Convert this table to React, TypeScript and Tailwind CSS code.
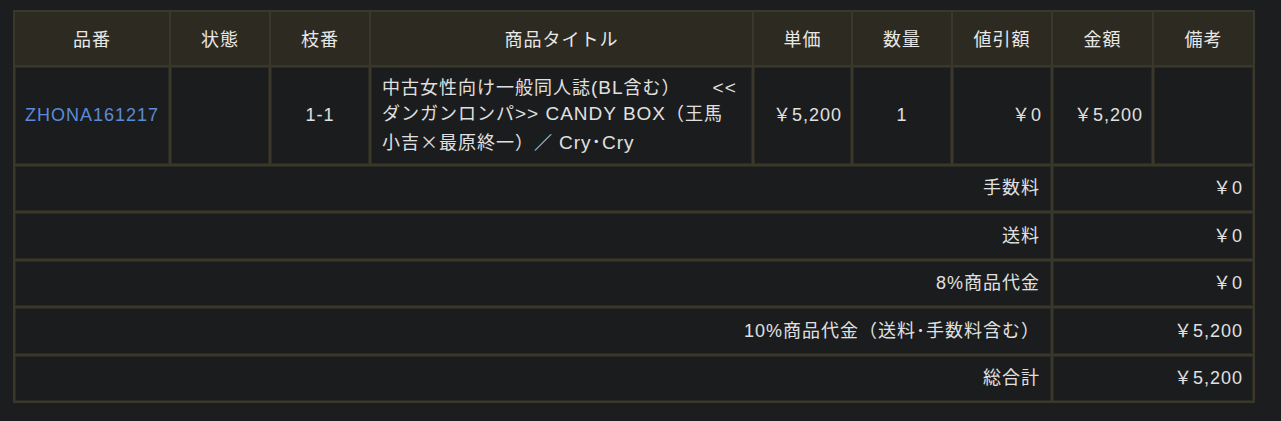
import React from 'react';

const headers = ['品番', '状態', '枝番', '商品タイトル', '単価', '数量', '値引額', '金額', '備考'];

const summaryRows = [
  { label: '手数料', value: '￥0' },
  { label: '送料', value: '￥0' },
  { label: '8%商品代金', value: '￥0' },
  { label: '10%商品代金（送料･手数料含む）', value: '￥5,200' },
  { label: '総合計', value: '￥5,200' },
];

const cell = 'border border-[#2c2b23] bg-[#1b1c1e] flex items-center';

// latin runs in the title render a touch larger than the kana/kanji
const Lat: React.FC<{ children: React.ReactNode; className?: string }> = ({ children, className }) => (
  <span className={`text-[19px] ${className ?? ''}`}>{children}</span>
);

export default function App() {
  return (
    <div className="min-h-[421px] w-[1281px] bg-[#1c1d1f] pl-[13px] pt-[10px] font-['Liberation_Sans','Noto_Sans_CJK_JP',sans-serif] text-[18px] tracking-[1px] text-[#e0e0e0]">
      <div className="grid w-[1242px] grid-cols-[154px_98px_98px_381px_97px_98px_98px_99px_99px] grid-rows-[53px_97px_45px_46px_45px_46px_45px] gap-[2px] bg-[#3a3829] p-[2px]">
        {/* Header */}
        {headers.map((label) => (
          <div
            key={label}
            className="flex items-center justify-center border border-[#2c2b23] bg-[#2d2b21] pt-[3px] text-[#e8e8e8]"
          >
            {label}
          </div>
        ))}

        {/* Item row */}
        <div className={`${cell} justify-center`}>
          <span className="text-[#5b8bd8]">ZHONA161217</span>
        </div>
        <div className={cell} />
        <div className={`${cell} justify-center`}>1-1</div>
        <div className={`${cell} pl-[10px] leading-[26.5px]`}>
          <p className="whitespace-nowrap">
            中古女性向け一般同人誌<Lat>(BL</Lat>含む）<Lat className="pl-[32px]">&lt;&lt;</Lat>
            <br />
            ダンガンロンパ<Lat>&gt;&gt; CANDY BOX</Lat>（王馬
            <br />
            小吉<span className="font-['Noto_Sans_CJK_JP',sans-serif]">×</span>最原終一）／ <Lat>Cry･Cry</Lat>
          </p>
        </div>
        <div className={`${cell} justify-end pr-[8px]`}>￥5,200</div>
        <div className={`${cell} justify-center`}>1</div>
        <div className={`${cell} justify-end pr-[8px]`}>￥0</div>
        <div className={`${cell} justify-end pr-[8px]`}>￥5,200</div>
        <div className={cell} />

        {/* Summary rows */}
        {summaryRows.map((row) => (
          <React.Fragment key={row.label}>
            <div className={`${cell} col-span-7 justify-end pr-[10px]`}>{row.label}</div>
            <div className={`${cell} col-span-2 justify-end pr-[9px]`}>{row.value}</div>
          </React.Fragment>
        ))}
      </div>
    </div>
  );
}
